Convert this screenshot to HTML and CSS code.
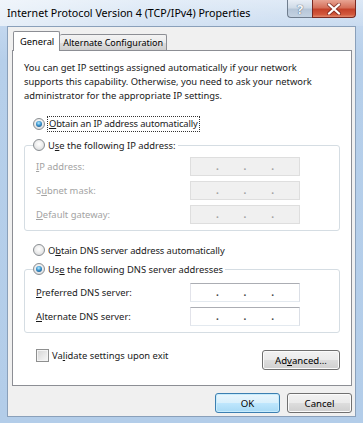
FILE: index.html
```html
<!DOCTYPE html>
<html>
<head>
<meta charset="utf-8">
<link rel="stylesheet" href="styles.css">
</head>
<body>
<div class="window">
  <div class="titlebar">
    <span class="title">Internet Protocol Version 4 (TCP/IPv4) Properties</span>
    <div class="caption-btns">
      <div class="cbtn help">?</div>
      <div class="cbtn close">
        <svg width="16" height="12" viewBox="0 0 16 12">
          <path d="M3 1.5 L13 10.5 M13 1.5 L3 10.5" stroke="#5a1410" stroke-width="4" stroke-linecap="round" opacity="0.55"/>
          <path d="M3 1.5 L13 10.5 M13 1.5 L3 10.5" stroke="#ffffff" stroke-width="2.3" stroke-linecap="round"/>
        </svg>
      </div>
    </div>
  </div>
  <div class="client">
    <div class="tabs">
      <div class="tab active">General</div>
      <div class="tab">Alternate Configuration</div>
    </div>
    <div class="panel">
      <p class="intro">You can get IP settings assigned automatically if your network<br>supports this capability. Otherwise, you need to ask your network<br>administrator for the appropriate IP settings.</p>

      <div class="opt first"><span class="radio checked"></span><span class="focus"><u>O</u>btain an IP address automatically</span></div>

      <fieldset class="group ip">
        <legend class="opt"><span class="radio"></span><span>U<u>s</u>e the following IP address:</span></legend>
        <div class="field disabled"><span class="lbl"><u>I</u>P address:</span><span class="ipbox"><i>.</i><i>.</i><i>.</i></span></div>
        <div class="field disabled"><span class="lbl">S<u>u</u>bnet mask:</span><span class="ipbox"><i>.</i><i>.</i><i>.</i></span></div>
        <div class="field disabled"><span class="lbl"><u>D</u>efault gateway:</span><span class="ipbox"><i>.</i><i>.</i><i>.</i></span></div>
      </fieldset>

      <div class="opt dns-auto"><span class="radio"></span><span>O<u>b</u>tain DNS server address automatically</span></div>

      <fieldset class="group dns">
        <legend class="opt"><span class="radio checked"></span><span>Us<u>e</u> the following DNS server addresses</span></legend>
        <div class="field"><span class="lbl"><u>P</u>referred DNS server:</span><span class="ipbox"><i>.</i><i>.</i><i>.</i></span></div>
        <div class="field"><span class="lbl"><u>A</u>lternate DNS server:</span><span class="ipbox"><i>.</i><i>.</i><i>.</i></span></div>
      </fieldset>

      <div class="bottom-row">
        <div class="check-row"><span class="checkbox"></span><span>Va<u>l</u>idate settings upon exit</span></div>
        <button class="btn adv">Ad<u>v</u>anced...</button>
      </div>
    </div>
    <div class="dlg-buttons">
      <button class="btn ok">OK</button>
      <button class="btn">Cancel</button>
    </div>
  </div>
</div>
</body>
</html>
```

FILE: styles.css
```css
* { box-sizing: border-box; }
html, body { margin: 0; padding: 0; }
body {
  width: 363px;
  height: 423px;
  overflow: hidden;
  background: #fff;
  font-family: "Noto Sans", "DejaVu Sans", sans-serif;
  font-size: 9.4px;
  color: #1a1a1a;
}
.window {
  width: 363px;
  height: 423px;
  display: flex;
  flex-direction: column;
  background: linear-gradient(180deg, #d9e6f5 0px, #c3d7ee 26px, #b6cfea 60px, #b3cde9 100%);
}
.titlebar {
  height: 26px;
  display: flex;
  align-items: flex-start;
  justify-content: space-between;
  padding-left: 7px;
  background: linear-gradient(90deg, rgba(255,255,255,0.6) 0%, rgba(255,255,255,0.3) 40%, rgba(255,255,255,0.1) 100%);
}
.title {
  font-size: 10.7px;
  color: #000;
  line-height: 16px;
  margin-top: 5px;
}
.caption-btns {
  display: flex;
  margin-right: 7px;
}
.cbtn {
  height: 18px;
  display: flex;
  align-items: center;
  justify-content: center;
  border: 1px solid #6f7d8e;
  border-top: none;
}
.help {
  width: 25px;
  border-radius: 0 0 0 4px;
  border-right: none;
  background: linear-gradient(180deg, #e8eef6 0%, #d0dbe7 45%, #b6c6d8 55%, #c4d2e2 100%);
  color: #f4f7fb;
  font-weight: bold;
  font-size: 13px;
  text-shadow: 0 0 1px #56677c, 0 0 1px #56677c;
}
.close {
  width: 44px;
  border-radius: 0 0 4px 0;
  border-color: #7a2a22;
  background: linear-gradient(180deg, #e8a493 0%, #d5705a 45%, #c4422a 55%, #d2583c 85%, #e28a6e 100%);
}
.client {
  flex: 1;
  margin: 0 7px 6px 7px;
  background: #f0f0f0;
  border: 1px solid #8aa0ba;
  padding: 4px 3px 0 4px;
  display: flex;
  flex-direction: column;
}
.tabs {
  display: flex;
  align-items: flex-end;
  height: 19px;
  margin-left: 1px;
  position: relative;
  z-index: 1;
}
.tab {
  height: 16px;
  padding: 0 3px;
  border: 1px solid #8c8e94;
  border-bottom: none;
  border-left: none;
  background: linear-gradient(180deg, #f3f3f3 0%, #ebebeb 50%, #dddddd 51%, #cfcfcf 100%);
  line-height: 15px;
  border-radius: 2px 2px 0 0;
  color: #000;
  font-size: 9px;
}
.tab.active {
  height: 20px;
  margin-bottom: -1px;
  border-left: 1px solid #8c8e94;
  background: #fff;
  padding: 0 5px 0 6px;
  line-height: 19px;
  font-size: 9.3px;
}
.panel {
  background: #fff;
  border: 1px solid #8c8e94;
  height: 336px;
  padding: 0 11px 0 11px;
  display: flex;
  flex-direction: column;
}
.intro {
  margin: 10px 0 0 0;
  line-height: 14px;
  color: #1a1a1a;
}
.opt {
  display: flex;
  align-items: center;
  height: 16px;
  gap: 3px;
}
.opt.first {
  margin: 13px 0 0 9px;
}
.focus {
  outline: 1px dotted #333;
  outline-offset: 0px;
  padding: 0 1px;
  line-height: 14px;
  letter-spacing: -0.15px;
}
.radio {
  width: 12px;
  height: 12px;
  border-radius: 50%;
  border: 1px solid #8a8e92;
  background: radial-gradient(circle at 50% 40%, #ffffff 0%, #eeeeee 45%, #cfd2d5 100%);
  position: relative;
  flex: none;
}
.radio.checked::after {
  content: "";
  position: absolute;
  left: 2px; top: 2px; right: 2px; bottom: 2px;
  border-radius: 50%;
  background: radial-gradient(circle at 45% 35%, #b8ecff 0%, #3b95cf 45%, #0f3f6e 100%);
}
.group {
  margin: 5px 0 0 0;
  padding: 0 0 6px 11px;
  border: 1px solid #d5dde3;
  border-radius: 3px;
  min-width: 0;
}
.group legend {
  margin-left: -3px;
  padding: 0 2px 0 0;
}
.group.ip .field:first-of-type { margin-top: 4px; }
.group.dns { margin-top: 3px; }
.group.dns .field:first-of-type { margin-top: 6px; }
.field {
  display: flex;
  align-items: center;
  height: 19px;
  margin-top: 5px;
}
.lbl {
  width: 154px;
  flex: none;
  color: #1a1a1a;
}
.field.disabled .lbl { color: #a3a3a3; }
.ipbox {
  width: 110px;
  height: 19px;
  border: 1px solid #abadb3;
  border-color: #abadb3 #dbdfe6 #e3e9ef #e2e3ea;
  background: #fff;
  display: flex;
  justify-content: space-evenly;
  align-items: center;
}
.field.disabled .ipbox {
  background: #f0f0f0;
  border-color: #dedede;
}
.ipbox i {
  font-style: normal;
  font-weight: bold;
  color: #444;
  line-height: 10px;
  font-size: 10px;
  position: relative;
  top: -1px;
}
.field.disabled .ipbox i { color: #a0a0a0; }
.opt.dns-auto { margin: 11px 0 0 9px; letter-spacing: -0.1px; }
.bottom-row {
  display: flex;
  justify-content: space-between;
  align-items: flex-start;
  margin: 14px 0 0 0;
}
.check-row {
  display: flex;
  align-items: center;
  gap: 3px;
  margin-left: 12px;
  height: 16px;
}
.checkbox {
  width: 13px;
  height: 13px;
  border: 1px solid #8e8f8f;
  background: linear-gradient(135deg, #d4d4d4 0%, #eaeaea 60%, #f7f7f7 100%);
  box-shadow: inset 0 0 0 1px #f4f4f4;
  flex: none;
}
.btn {
  font-family: inherit;
  font-size: 9.6px;
  color: #000;
  height: 20px;
  padding: 0;
  border: 1px solid #707070;
  border-radius: 3px;
  background: linear-gradient(180deg, #f2f2f2 0%, #ebebeb 48%, #dddddd 52%, #cfcfcf 100%);
  box-shadow: inset 0 0 0 1px #fbfbfb;
}
.btn.adv {
  width: 78px;
  margin-top: 3px;
}
.dlg-buttons {
  display: flex;
  justify-content: flex-end;
  gap: 7px;
  margin-top: 7px;
}
.dlg-buttons .btn {
  width: 65px;
}
.btn.ok {
  border-color: #3c7fb1;
  background: linear-gradient(180deg, #eaf6fd 0%, #d9f0fc 48%, #bee6fd 52%, #a7d9f5 100%);
  box-shadow: inset 0 0 0 1px #c8ecfc;
}
```
